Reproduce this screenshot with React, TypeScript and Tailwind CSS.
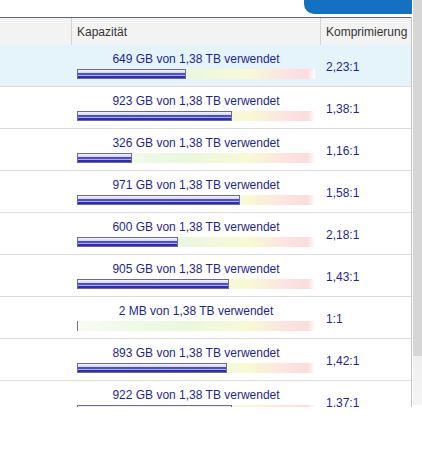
const ROWS = [
  { used: "649 GB", gb: 649, ratio: "2,23:1", active: true },
  { used: "923 GB", gb: 923, ratio: "1,38:1" },
  { used: "326 GB", gb: 326, ratio: "1,16:1" },
  { used: "971 GB", gb: 971, ratio: "1,58:1" },
  { used: "600 GB", gb: 600, ratio: "2,18:1" },
  { used: "905 GB", gb: 905, ratio: "1,43:1" },
  { used: "2 MB", gb: 0, ratio: "1:1" },
  { used: "893 GB", gb: 893, ratio: "1,42:1" },
  { used: "922 GB", gb: 922, ratio: "1,37:1" },
];

// full scale of the usage bar, 1,38 TB
const TOTAL_GB = 1380;
const BAR_W = 232;

function UsageBar({ gb }: { gb: number }) {
  return (
    <div className="mt-[3px] h-[10px] w-[238px] bg-[linear-gradient(to_right,#f7fcf3,#e9f8de_45%,#f9f9d4_72%,#fde3e0_88%,#fcdcdc_97%,#ffffff)]">
      {gb > 0 ? (
        <div
          className="h-full border border-[#6c6c84] bg-[linear-gradient(to_bottom,#f4f4ff_0%,#d4d4f6_40%,#4a4ae4_40%,#4a4ae4_62%,#b4b4f2_62%,#b4b4f2_72%,#2c2cb4_72%)]"
          style={{ width: Math.round((gb / TOTAL_GB) * BAR_W) }}
        />
      ) : (
        <div className="ml-0 h-full w-px bg-[#777]" />
      )}
    </div>
  );
}

export default function App() {
  return (
    <div className="flex h-[460px] w-[422px] bg-white font-['Liberation_Sans',Arial,sans-serif] text-[12px]">
      <div className="flex w-[412px] flex-col">
        <div className="flex h-[17px] justify-end">
          <div className="h-[14px] w-[108px] rounded-bl-[10px] bg-[#1271c0]" />
        </div>
        <div className="h-[390px] overflow-hidden border-r border-[#c4c4c4]">
          <div className="flex h-[28px] border-t border-[#5d6670] bg-[#f3f3f3] text-[#333]">
            <div className="w-[72px] border-r border-[#d4d4d4]" />
            <div className="flex w-[249px] items-center border-r border-[#d4d4d4] pl-[5px]">Kapazität</div>
            <div className="flex flex-1 items-center pl-[5px]">Komprimierung</div>
          </div>
          {ROWS.map((r) => (
            <div
              key={r.used + r.ratio}
              className={`flex h-[42px] border-b border-[#dcdcdc] text-[#1f1f96] ${r.active ? "bg-[#e5f3fb]" : "bg-white"}`}
            >
              <div className="w-[72px]" />
              <div className="flex w-[249px] flex-col pl-[5px] pt-[7px]">
                <div className="w-[238px] text-center leading-[14px]">{r.used} von 1,38 TB verwendet</div>
                <UsageBar gb={r.gb} />
              </div>
              <div className="flex flex-1 items-center pl-[5px] pt-[2px]">{r.ratio}</div>
            </div>
          ))}
        </div>
      </div>
      <div className="ml-px h-[405px] w-[9px] bg-[linear-gradient(to_bottom,#d6d6d6_0%,#d6d6d6_88%,#efefef_88%,#f4f4f4_100%)]" />
    </div>
  );
}
